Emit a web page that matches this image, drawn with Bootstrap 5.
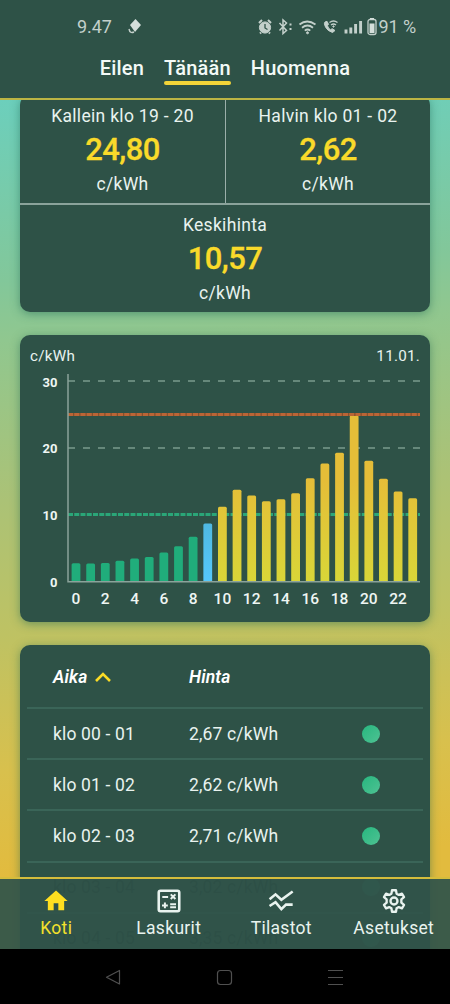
<!DOCTYPE html>
<html lang="fi">
<head>
<meta charset="utf-8">
<meta name="viewport" content="width=device-width, initial-scale=1">
<title>Sähkön hinta</title>
<link href="https://cdn.jsdelivr.net/npm/bootstrap@5.3.0/dist/css/bootstrap.min.css" rel="stylesheet">
<style>
:root{--panel:#2e5247;--ink:#e9f3ef;--gold:#f9da2a}
body{height:1004px;width:450px;overflow:hidden;background:#000;color:var(--ink);font-family:Roboto,sans-serif;font-size:17.5px;letter-spacing:.31px;line-height:24px}
.top-area{height:100px;background:var(--panel);border-bottom:2px solid #bcb544;z-index:3}
.statusbar{height:52px;padding:1px 34px 0 77px;color:#c3d0cb;font-size:18px;letter-spacing:-.1px}
.day-tabs{gap:20px;font-size:20px;font-weight:500;letter-spacing:.2px;line-height:24px;color:#f3faf7}
.day-tabs a{color:inherit;text-decoration:none;padding:4px 0 1px;border-bottom:4px solid transparent;border-radius:2px}
.day-tabs .tab-on{position:relative}
.day-tabs .tab-on::after{content:"";position:absolute;left:0;right:0;bottom:-4px;height:4px;border-radius:2px;background:#f3d438}
.scroll-area{height:849px;padding:0 20px;background:linear-gradient(176deg,#6ccfbc 0,#82c79a 180px,#90c78f 240px,#abc276 400px,#bfc262 540px,#d8c04d 670px,#e2bb3e 775px)}
.panel{background:var(--panel);border-radius:10px;box-shadow:0 2px 10px rgba(30,100,80,.5)}
.summary{margin-top:-5px;height:217px}
.summary .upper{height:110px;border-bottom:2px solid #8ba39b}
.summary .cell{padding-top:9px}
.summary .upper+.cell{padding-top:8px}
.summary .cell+.cell{border-left:1px solid #9bafaa}
.summary .upper~.cell{border-left:0}
.price{font-size:31px;line-height:34px;font-weight:500;letter-spacing:-.6px;-webkit-text-stroke:.3px;color:var(--gold);padding:5px 0 5px}
.chart-panel{margin-top:23px;height:287px;padding:10px 10px 0}
.chart-panel .caption-line{font-size:15.2px;line-height:22px;letter-spacing:.25px}
.chart-panel svg{display:block;margin:0 -10px}
.chart-panel text{fill:#eef6f3;font-weight:500}
.chart-panel .scale text{font-weight:700}
.list-panel{margin-top:23px;height:330px;padding:0 7px}
.hour-row{display:grid;grid-template-columns:136px 173px 1fr;height:51.2px;align-items:center;padding-left:26px;border-top:2px solid #3a6558;letter-spacing:.15px}
.hour-head{height:62px;padding-top:2px;border:0;font-style:italic;font-weight:600;font-size:17.5px;letter-spacing:.15px;color:#fff}
.faded{color:#061510}
.faded .level{opacity:.5}
.level{width:18px;height:18px;border-radius:50%;background:linear-gradient(135deg,#27b77f,#4fc293)}
.tabbar{position:absolute;left:0;bottom:55px;width:450px;height:72px;background:rgba(48,84,74,.935);border-top:2px solid #d5bd3c;z-index:2}
.tabbar a{color:var(--ink);text-decoration:none;width:25%;padding-top:8px}
.tabbar a.chosen{color:#f4e12c}
.tabbar svg{display:block;margin:0 auto 1px}
.tabbar .chosen svg{color:#ffdf20}
.sysbar{height:55px;color:#505050}
</style>
</head>
<body class="d-flex flex-column position-relative">
<header class="top-area position-relative flex-shrink-0">
  <div class="statusbar d-flex align-items-center">
    <span>9.47</span>
    <svg class="ms-3" width="14" height="17" viewBox="0 0 14 17"><path d="M7.500 1l5.500 6-6 7-5-7z" fill="#d5dfdb"/><path d="M1 11q1 5 5 3" fill="none" stroke="#c3d0cb" stroke-width="1.4"/></svg>
    <svg class="ms-auto" width="109" height="20" viewBox="0 0 109 20" fill="none" stroke="#c3d0cb">
      <circle cx="7" cy="10.500" r="5.600" fill="#c3d0cb"/><path d="M1 6l3-3M13 6l-3-3M3 15.500l-1 1M11 15.500l1 1" stroke-width="2"/><path d="M7 7v4l2.500 1.500" stroke="#2e5247" stroke-width="1.300"/>
      <path d="M21.500 6l7 7.500-3.500 3V3l3.500 3-7 7.500" stroke-width="1.500"/><path d="M31.500 7.500h2M31.500 12h2" stroke-width="1.800"/>
      <path d="M41.500 7.500q7.500-6 16 0M44 10.800q5.500-4.500 11 0M46.800 13.600q2.700-2.200 5.500 0" stroke-width="1.800"/><circle cx="49.500" cy="15.800" r="1" fill="#c3d0cb"/>
      <path d="M67 5q-1.500 1 .5 5t7 5.500l2.500-2-2.800-1.800-1.700 1q-2.500-1.300-3-4l1-1.400-1.500-3z" fill="#c3d0cb" stroke-width="1"/><path d="M71.500 5.500q4-3 8 0M73 8q2.500-2 5 0" stroke-width="1.300"/><circle cx="75.500" cy="9.500" r=".7" fill="#c3d0cb"/>
      <path d="M88 16.500v-4M92.800 16.500v-6M97.600 16.500V7M102.600 16.500V4" stroke-width="2.900"/>
    </svg>
    <svg width="10" height="20" viewBox="0 0 10 20"><rect x="1" y="2.500" width="8" height="15" rx="2" fill="none" stroke="#c3d0cb" stroke-width="1.300"/><path d="M3 1h4v1.500H3zM2.500 6.500h5v9.500h-5z" fill="#d5dfdb"/></svg>
    <span style="padding-left:2px">91 %</span>
  </div>
  <nav class="day-tabs d-flex justify-content-center">
    <a href="#">Eilen</a><a href="#" class="tab-on">Tänään</a><a href="#">Huomenna</a>
  </nav>
</header>
<main class="scroll-area overflow-hidden flex-shrink-0">
  <section class="panel summary text-center">
    <div class="upper d-flex">
      <div class="cell w-50"><div>Kallein klo 19 - 20</div><div class="price">24,80</div><div>c/kWh</div></div>
      <div class="cell w-50"><div>Halvin klo 01 - 02</div><div class="price">2,62</div><div>c/kWh</div></div>
    </div>
    <div class="cell"><div>Keskihinta</div><div class="price">10,57</div><div>c/kWh</div></div>
  </section>
  <section class="panel chart-panel">
    <div class="caption-line d-flex justify-content-between"><span>c/kWh</span><span>11.01.</span></div>
    <svg id="chart" width="410" height="250" viewBox="20 367 410 250">
      <defs>
        <linearGradient id="sun" gradientUnits="userSpaceOnUse" x1="0" y1="480" x2="0" y2="581"><stop stop-color="#e5bd38"/><stop offset="1" stop-color="#d9d638"/></linearGradient>
        <linearGradient id="sky" x1="0" y1="0" x2="0" y2="1"><stop stop-color="#4fb9e2"/><stop offset="1" stop-color="#55c8fb"/></linearGradient>
      </defs>
      <path d="M68 381H420M68 448H420" stroke="#799b8d" stroke-width="1.700" stroke-dasharray="7 8"/>
      <path d="M68 514.500H420" stroke="#2aa678" stroke-width="3" stroke-dasharray="5 1.250"/>
      <g id="bars"></g>
      <path d="M68 414.500H420" stroke="#84512d" stroke-width="3"/>
      <path d="M68 414.500H420" stroke="#bb6536" stroke-width="3" stroke-dasharray="5 1.250"/>
      <path d="M68 374V581.800H420" fill="none" stroke="#8ba39b" stroke-width="1.500"/>
      <g class="scale" font-size="13" letter-spacing="0" text-anchor="end"><text x="57.500" y="386.500">30</text><text x="57.500" y="453.200">20</text><text x="57.500" y="519.800">10</text><text x="57.500" y="586.500">0</text></g>
      <g id="hours" font-size="15.500" letter-spacing="0" text-anchor="middle"></g>
    </svg>
  </section>
  <section class="panel list-panel">
    <div class="hour-row hour-head"><span class="d-flex align-items-center">Aika<svg class="ms-2" width="16" height="10" viewBox="0 0 16 10"><path d="M1 9l7-7 7 7" fill="none" stroke="#fbdc26" stroke-width="2.600"/></svg></span><span>Hinta</span></div>
    <div class="hour-row"><span>klo 00 - 01</span><span>2,67 c/kWh</span><span><i class="level d-block"></i></span></div>
    <div class="hour-row"><span>klo 01 - 02</span><span>2,62 c/kWh</span><span><i class="level d-block"></i></span></div>
    <div class="hour-row"><span>klo 02 - 03</span><span>2,71 c/kWh</span><span><i class="level d-block"></i></span></div>
    <div class="hour-row faded"><span>klo 03 - 04</span><span>3,02 c/kWh</span><span><i class="level d-block"></i></span></div>
    <div class="hour-row faded"><span>klo 04 - 05</span><span>3,35 c/kWh</span><span><i class="level d-block"></i></span></div>
  </section>
</main>
<nav class="tabbar d-flex text-center">
  <a href="#" class="chosen"><svg width="28" height="28" viewBox="0 0 24 24" fill="currentColor"><path d="M10 20v-6h4v6h5v-8h3L12 3 2 12h3v8z"/></svg>Koti</a>
  <a href="#"><svg width="28" height="28" viewBox="0 0 24 24" fill="none" stroke="currentColor"><rect x="3.200" y="3.200" width="17.600" height="17.600" rx="1.500" stroke-width="2.200"/><path d="M6.250 8.500h5M6 15.800h5M8.500 13.300v5M13 14.800h5M13 17.400h5" stroke-width="1.700"/><path d="M13.500 6.300l4 4M17.500 6.300l-4 4" stroke-width="1.700"/></svg>Laskurit</a>
  <a href="#"><svg width="28" height="28" viewBox="0 0 24 24" fill="none" stroke="currentColor" stroke-width="2.200"><path d="M2.200 10.400L7.300 6.300l5 4.600L22 3.800M2.200 16.300l5.100-3.300 5 6 4-3.900H22"/></svg>Tilastot</a>
  <a href="#"><svg width="28" height="28" viewBox="0 0 24 24" fill="none" stroke="currentColor" stroke-width="2" stroke-linejoin="round"><path d="M10.300 2.800h3.400l.5 2.900 1.900 1.100 2.700-1.100 1.800 3-2.300 1.900v2.800l2.300 1.900-1.800 3-2.700-1.100-1.900 1.100-.5 2.900h-3.400l-.5-2.900-1.900-1.100-2.700 1.100-1.800-3 2.300-1.900v-2.800L3.400 8.700l1.800-3 2.700 1.100 1.900-1.100z"/><circle cx="12" cy="12" r="3"/></svg>Asetukset</a>
</nav>
<footer class="sysbar d-flex justify-content-center align-items-center flex-shrink-0">
  <svg width="240" height="20" viewBox="105 966 240 20" fill="none" stroke="currentColor" stroke-width="1.200" stroke-linejoin="round"><path d="M119.500 969.500v13.500l-13-6.700z"/><rect x="217.500" y="969.500" width="14" height="14" rx="3"/><path d="M328 969.500h15M328 976.500h15M328 983.500h15"/></svg>
</footer>
<script>
// Hourly prices, c/kWh
const prices=[2.67,2.62,2.71,3.02,3.35,3.6,4.25,5.2,6.62,8.6,11.1,13.65,12.8,11.95,12.25,13.15,15.4,17.6,19.2,24.8,18,15.3,13.4,12.4];
let bars='',hours='';
prices.forEach((p,h)=>{
  const x=76+h*14.64,hgt=p*6.68,y=581-hgt;
  const fill=h===9?'url(#sky)':h<9?'#20ad7b':'url(#sun)';
  bars+=`<path d="M${x-4.4} 581V${y+1.5}q0-1.500 1.500-1.500h5.800q1.500 0 1.500 1.500V581z" fill="${fill}"/>`;
  if(h%2===0)hours+=`<text x="${x}" y="604">${h}</text>`;
});
document.getElementById('bars').innerHTML=bars;
document.getElementById('hours').innerHTML=hours;
</script>
<script src="https://cdn.jsdelivr.net/npm/bootstrap@5.3.0/dist/js/bootstrap.bundle.min.js"></script>
</body>
</html>
